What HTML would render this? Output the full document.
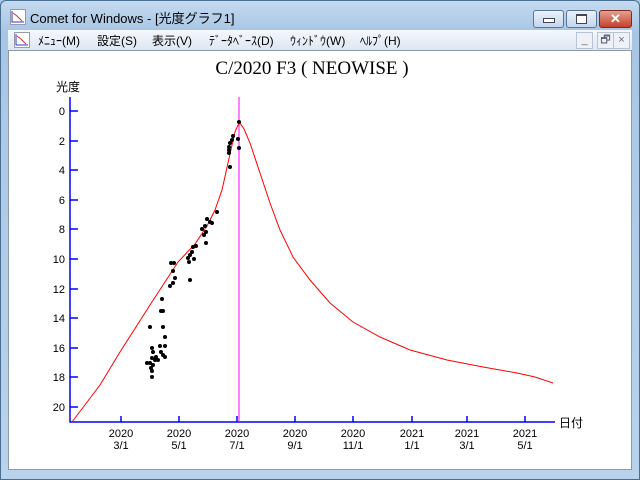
<!DOCTYPE html>
<html><head><meta charset="utf-8"><style>
body{margin:0;width:640px;height:480px;overflow:hidden;background:#a9c8e6;font-family:"Liberation Sans","Noto Sans CJK JP",sans-serif;position:relative}
.frame{position:absolute;left:0;top:0;width:638px;height:478px;border:1px solid #4a6d92;border-radius:6px 6px 0 0;background:linear-gradient(#c4daf0,#a8c6e4 30px,#b9d3ec)}
.title{position:absolute;left:30px;top:8px;font-size:13px;color:#000}
.btn{position:absolute;top:10px;height:16px;border:1px solid #5a7696;border-radius:3px;background:linear-gradient(#eaf2fb,#c3d6ec)}
.menu{position:absolute;left:8px;top:30px;width:624px;height:20px;background:linear-gradient(#f5f8fc,#dde7f3)}
.menu span{position:absolute;top:2px;font-size:12px}
.mb{position:absolute;top:2px;width:15px;height:15px;border:1px solid #b8c4d2;background:#eef2f7;font-size:11px;color:#667;text-align:center;line-height:15px}
.client{position:absolute;left:8px;top:50px;width:622px;height:418px;border:1px solid #8e9aa8;background:#fff}
</style></head><body>
<div class="frame"></div>
<svg style="position:absolute;left:10px;top:9px" width="16" height="16"><rect x="0.5" y="0.5" width="15" height="15" fill="#fff" stroke="#99a"/><path d="M2 2v11h12" stroke="#33c" fill="none"/><path d="M3 4l4 3 5 5" stroke="#c33" fill="none"/></svg>
<div class="title">Comet for Windows - [光度グラフ1]</div>
<div class="btn" style="left:533px;width:29px"><div style="position:absolute;left:9px;top:7px;width:10px;height:3px;background:#fff;border:1px solid #445"></div></div>
<div class="btn" style="left:566px;width:29px"><div style="position:absolute;left:9px;top:3px;width:9px;height:7px;border:1px solid #445;background:#fff;border-top-width:2px"></div></div>
<div class="btn" style="left:599px;width:31px;background:linear-gradient(#e8a090,#c4402c);border-color:#7a2a20;color:#fff;font-weight:bold;font-size:13px;text-align:center;line-height:16px">✕</div>
<div class="menu">
<svg style="position:absolute;left:6px;top:2px" width="16" height="16"><rect x="0.5" y="0.5" width="15" height="15" fill="#fff" stroke="#99a"/><path d="M2 2v11h12" stroke="#33c" fill="none"/><path d="M3 4l4 3 5 5" stroke="#c33" fill="none"/></svg>
<span style="left:30px">ﾒﾆｭｰ(M)</span><span style="left:89px">設定(S)</span><span style="left:144px">表示(V)</span><span style="left:201px">ﾃﾞｰﾀﾍﾞｰｽ(D)</span><span style="left:282px">ｳｨﾝﾄﾞｳ(W)</span><span style="left:352px">ﾍﾙﾌﾟ(H)</span>
<div class="mb" style="left:568px">_</div><div class="mb" style="left:589px">🗗</div><div class="mb" style="left:605px">×</div>
</div>
<div class="client"></div>
<svg style="position:absolute;left:0;top:0" width="640" height="480" font-family="Liberation Sans, Noto Sans CJK JP, sans-serif">
<text x="312" y="74" text-anchor="middle" font-family="Liberation Serif,serif" font-size="19">C/2020 F3 ( NEOWISE )</text>
<text x="56" y="91" font-size="12">光度</text>
<g stroke="#00f" stroke-width="1.5" fill="none">
<path d="M70 97V422H555"/>
<path d="M70 111h8M70 141h8M70 170h8M70 200h8M70 229h8M70 259h8M70 289h8M70 318h8M70 348h8M70 377h8M70 407h8"/>
<path d="M121 422v-6M179 422v-6M237 422v-6M295 422v-6M353 422v-6M412 422v-6M467 422v-6M525 422v-6"/>
</g>
<g font-size="11" text-anchor="end"><text x="65" y="115">0</text><text x="65" y="145">2</text><text x="65" y="174">4</text><text x="65" y="204">6</text><text x="65" y="233">8</text><text x="65" y="263">10</text><text x="65" y="293">12</text><text x="65" y="322">14</text><text x="65" y="352">16</text><text x="65" y="381">18</text><text x="65" y="411">20</text></g>
<g font-size="11" text-anchor="middle">
<text x="121" y="437">2020</text><text x="121" y="449">3/1</text>
<text x="179" y="437">2020</text><text x="179" y="449">5/1</text>
<text x="237" y="437">2020</text><text x="237" y="449">7/1</text>
<text x="295" y="437">2020</text><text x="295" y="449">9/1</text>
<text x="353" y="437">2020</text><text x="353" y="449">11/1</text>
<text x="412" y="437">2021</text><text x="412" y="449">1/1</text>
<text x="467" y="437">2021</text><text x="467" y="449">3/1</text>
<text x="525" y="437">2021</text><text x="525" y="449">5/1</text>
</g>
<text x="559" y="427" font-size="12">日付</text>
<path d="M239 97V422" stroke="#f0f" stroke-width="1"/>
<path d="M72 422L100 385L120 352L150 305L165 282L178 262L195 244L207 226L215 210L222 190L228 163L232 145L235 132L238 125L240 123L244 129L250 143L260 173L270 203L280 230L293 257L310 280L330 303L353 322L380 337L410 350L447 360L483 367L517 373L535 377L553 383" stroke="#f00" fill="none"/>
<g fill="#000">
<circle cx="239" cy="122" r="2"/><circle cx="233" cy="136" r="2"/><circle cx="238" cy="139" r="2"/><circle cx="232" cy="140" r="2"/><circle cx="230" cy="143" r="2"/><circle cx="229" cy="147" r="2"/><circle cx="229" cy="150" r="2"/><circle cx="229" cy="153" r="2"/><circle cx="239" cy="148" r="2"/><circle cx="230" cy="167" r="2"/>
<circle cx="217" cy="212" r="2"/><circle cx="207" cy="219" r="2"/><circle cx="212" cy="223" r="2"/><circle cx="210" cy="222" r="2"/><circle cx="205" cy="226" r="2"/><circle cx="202" cy="229" r="2"/><circle cx="206" cy="232" r="2"/><circle cx="204" cy="235" r="2"/><circle cx="206" cy="243" r="2"/><circle cx="196" cy="246" r="2"/><circle cx="193" cy="247" r="2"/><circle cx="192" cy="252" r="2"/><circle cx="190" cy="255" r="2"/><circle cx="188" cy="258" r="2"/><circle cx="194" cy="259" r="2"/><circle cx="189" cy="262" r="2"/><circle cx="171" cy="263" r="2"/><circle cx="174" cy="263" r="2"/><circle cx="173" cy="271" r="2"/><circle cx="175" cy="278" r="2"/><circle cx="190" cy="280" r="2"/><circle cx="173" cy="283" r="2"/><circle cx="170" cy="286" r="2"/><circle cx="162" cy="299" r="2"/><circle cx="161" cy="311" r="2"/><circle cx="163" cy="311" r="2"/><circle cx="150" cy="327" r="2"/><circle cx="163" cy="327" r="2"/><circle cx="165" cy="337" r="2"/><circle cx="165" cy="346" r="2"/><circle cx="160" cy="346" r="2"/><circle cx="152" cy="348" r="2"/><circle cx="153" cy="352" r="2"/><circle cx="161" cy="352" r="2"/><circle cx="163" cy="355" r="2"/><circle cx="165" cy="357" r="2"/><circle cx="152" cy="358" r="2"/><circle cx="155" cy="360" r="2"/><circle cx="158" cy="360" r="2"/><circle cx="156" cy="357" r="2"/><circle cx="150" cy="363" r="2"/><circle cx="147" cy="363" r="2"/><circle cx="153" cy="365" r="2"/><circle cx="151" cy="368" r="2"/><circle cx="152" cy="371" r="2"/><circle cx="152" cy="377" r="2"/>
</g>
</svg>
</body></html>
